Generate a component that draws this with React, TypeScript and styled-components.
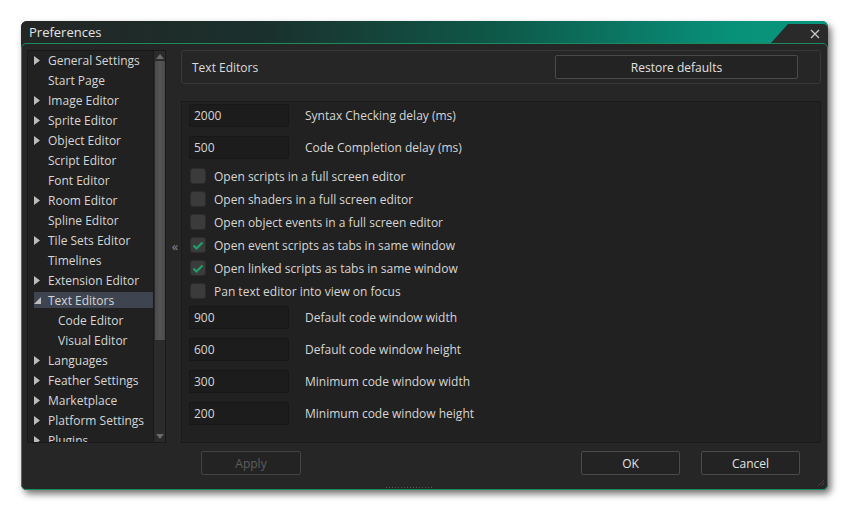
import React from 'react';
import styled, { createGlobalStyle } from 'styled-components';

const Global = createGlobalStyle`
  html, body { margin: 0; padding: 0; background: #ffffff; }
  body { font-family: "Open Sans", "DejaVu Sans", sans-serif; font-size: 12px; }
  * { box-sizing: border-box; }
`;

const Page = styled.div`
  width: 848px;
  height: 517px;
  padding: 21px 0 0 21px;
`;

const Window = styled.div`
  position: relative;
  width: 807px;
  height: 469px;
  display: flex;
  flex-direction: column;
  border-radius: 6px;
  background: #262626;
  box-shadow: 3px 4px 7px rgba(0, 0, 0, 0.55);
`;

const TitleBar = styled.div`
  position: relative;
  height: 22px;
  flex: none;
  display: flex;
  align-items: center;
  padding-left: 8px;
  border-radius: 6px 6px 0 0;
  background: linear-gradient(90deg, #232625 0%, #1a302c 30%, #0e5a4a 60%, #08917a 88%, #08977c 100%);
  color: #e4e4e4;
  font-size: 13px;
`;

const CloseCorner = styled.div`
  position: absolute;
  right: 0;
  top: 3px;
  width: 57px;
  height: 19px;
  background: #2a2a2a;
  clip-path: polygon(17px 0, 100% 0, 100% 100%, 0 100%);
  border-top-right-radius: 5px;
  display: flex;
  align-items: center;
  justify-content: flex-end;
  padding-right: 8px;
`;

const Body = styled.div`
  position: relative;
  flex: 1;
  display: flex;
  flex-direction: column;
  border: 1px solid #1d8a5e;
  border-radius: 5px;
  background: #262626;
  padding: 6px 6px 0 5px;
`;

const MainRow = styled.div`
  display: flex;
  height: 393px;
`;

const Tree = styled.div`
  width: 139px;
  display: flex;
  border: 1px solid #191919;
  background: #212121;
`;

const TreeList = styled.div`
  flex: 1;
  overflow: hidden;
  padding-top: 0;
  margin-top: -1px;
`;

const TreeRow = styled.div<{ $indent: number; $selected?: boolean }>`
  height: 20px;
  padding: 2px 0;
  display: flex;
  align-items: center;
  padding-left: ${(p) => 6 + p.$indent}px;
  color: #d6d6d6;
  white-space: nowrap;
  background: ${(p) => (p.$selected ? '#3e4550' : 'transparent')};
  background-clip: content-box;
`;

const Arrow = styled.span`
  width: 14px;
  flex: none;
  display: flex;
  align-items: center;
`;

const ScrollBar = styled.div`
  width: 12px;
  display: flex;
  flex-direction: column;
  align-items: center;
  background: #2b2b2b;
  border-left: 1px solid #1a1a1a;
`;

const ScrollArrow = styled.div<{ $h: number }>`
  height: ${(p) => p.$h}px;
  display: flex;
  align-items: center;
  justify-content: center;
`;

const Thumb = styled.div`
  width: 10px;
  height: 279px;
  background: linear-gradient(90deg, #4a4a4a, #545454 50%, #4a4a4a);
`;

const Spacer = styled.div`
  flex: 1;
`;

const Splitter = styled.div`
  width: 15px;
  display: flex;
  align-items: center;
  justify-content: center;
  color: #8a8a8a;
  font-size: 13px;
  padding: 0 0 2px 3px;
`;

const RightCol = styled.div`
  flex: 1;
  display: flex;
  flex-direction: column;
  gap: 17px;
`;

const Header = styled.div`
  height: 34px;
  display: flex;
  align-items: center;
  justify-content: space-between;
  padding: 0 22px 0 10px;
  border: 1px solid #383838;
  border-radius: 3px;
  background: #262626;
  color: #dcdcdc;
`;

const Button = styled.button<{ $w: number; $disabled?: boolean }>`
  width: ${(p) => p.$w}px;
  height: 24px;
  border: 1px solid #4a4a4a;
  border-radius: 2px;
  background: #232323;
  color: ${(p) => (p.$disabled ? '#5e5e5e' : '#e2e2e2')};
  border-color: ${(p) => (p.$disabled ? '#434343' : '#4a4a4a')};
  font-family: "Open Sans", "DejaVu Sans", sans-serif;
  font-size: 12px;
  padding: 0;
`;

const Panel = styled.div`
  flex: 1;
  background: #212121;
  border: 1px solid #1a1a1a;
  padding: 2px 7px;
  display: flex;
  flex-direction: column;
`;

const InputRow = styled.div`
  height: 23px;
  margin-bottom: 9px;
  display: flex;
  align-items: center;
  gap: 16px;
  color: #d6d6d6;
`;

const Field = styled.div`
  width: 100px;
  height: 23px;
  display: flex;
  align-items: center;
  padding-left: 4px;
  background: #1c1c1c;
  border: 1px solid #171717;
  border-radius: 2px;
  color: #d6d6d6;
`;

const CheckRow = styled.div`
  height: 16px;
  margin-bottom: 7px;
  display: flex;
  align-items: center;
  gap: 8px;
  padding-left: 1px;
  color: #d6d6d6;
`;

const Box = styled.div`
  width: 16px;
  height: 16px;
  border-radius: 3px;
  background: #3b3b3b;
  border: 1px solid #2c2c2c;
  display: flex;
  align-items: center;
  justify-content: center;
`;

const Footer = styled.div`
  display: flex;
  height: 24px;
  margin-top: 8px;
  padding: 0 21px 0 174px;
`;

const FooterRight = styled.div`
  margin-left: auto;
  display: flex;
  gap: 21px;
`;

const Grip = styled.div`
  align-self: flex-start;
  margin-left: 358px;
  width: 48px;
  height: 3px;
  margin-top: 11px;
  background-image: radial-gradient(circle, #5a5a5a 0.8px, transparent 1px);
  background-size: 3px 3px;
`;

const ResizeGrip = styled.div`
  position: absolute;
  right: 2px;
  bottom: 2px;
  width: 8px;
  height: 8px;
  display: flex;
`;

const RightTri = () => (
  <svg width="6" height="9" viewBox="0 0 6 9">
    <path d="M0 0 L6 4.5 L0 9 Z" fill="#bcbcbc" />
  </svg>
);

const DownTri = () => (
  <svg width="7" height="7" viewBox="0 0 7 7">
    <path d="M7 0 L7 7 L0 7 Z" fill="#bcbcbc" />
  </svg>
);

type Item = { label: string; arrow?: 'right' | 'down'; indent?: number; selected?: boolean };

const items: Item[] = [
  { label: 'General Settings', arrow: 'right' },
  { label: 'Start Page' },
  { label: 'Image Editor', arrow: 'right' },
  { label: 'Sprite Editor', arrow: 'right' },
  { label: 'Object Editor', arrow: 'right' },
  { label: 'Script Editor' },
  { label: 'Font Editor' },
  { label: 'Room Editor', arrow: 'right' },
  { label: 'Spline Editor' },
  { label: 'Tile Sets Editor', arrow: 'right' },
  { label: 'Timelines' },
  { label: 'Extension Editor', arrow: 'right' },
  { label: 'Text Editors', arrow: 'down', selected: true },
  { label: 'Code Editor', indent: 10 },
  { label: 'Visual Editor', indent: 10 },
  { label: 'Languages', arrow: 'right' },
  { label: 'Feather Settings', arrow: 'right' },
  { label: 'Marketplace', arrow: 'right' },
  { label: 'Platform Settings', arrow: 'right' },
  { label: 'Plugins', arrow: 'right' },
];

const Check = () => (
  <svg width="12" height="12" viewBox="0 0 12 12">
    <path d="M1.5 6.5 L4.5 9.5 L10.5 3.5" stroke="#1fa06a" strokeWidth="2.2" fill="none" />
  </svg>
);

type Setting =
  | { kind: 'input'; value: string; label: string }
  | { kind: 'check'; checked: boolean; label: string };

const settings: Setting[] = [
  { kind: 'input', value: '2000', label: 'Syntax Checking delay (ms)' },
  { kind: 'input', value: '500', label: 'Code Completion delay (ms)' },
  { kind: 'check', checked: false, label: 'Open scripts in a full screen editor' },
  { kind: 'check', checked: false, label: 'Open shaders in a full screen editor' },
  { kind: 'check', checked: false, label: 'Open object events in a full screen editor' },
  { kind: 'check', checked: true, label: 'Open event scripts as tabs in same window' },
  { kind: 'check', checked: true, label: 'Open linked scripts as tabs in same window' },
  { kind: 'check', checked: false, label: 'Pan text editor into view on focus' },
  { kind: 'input', value: '900', label: 'Default code window width' },
  { kind: 'input', value: '600', label: 'Default code window height' },
  { kind: 'input', value: '300', label: 'Minimum code window width' },
  { kind: 'input', value: '200', label: 'Minimum code window height' },
];

export default function App() {
  return (
    <Page>
      <Global />
      <Window>
        <TitleBar>
          Preferences
          <CloseCorner>
            <svg width="10" height="10" viewBox="0 0 10 10">
              <path d="M1 1 L9 9 M9 1 L1 9" stroke="#c8c8c8" strokeWidth="1.3" />
            </svg>
          </CloseCorner>
        </TitleBar>
        <Body>
          <MainRow>
            <Tree>
              <TreeList>
                {items.map((it) => (
                  <TreeRow key={it.label} $indent={it.indent ?? 0} $selected={it.selected}>
                    <Arrow>
                      {it.arrow === 'right' && <RightTri />}
                      {it.arrow === 'down' && <DownTri />}
                    </Arrow>
                    {it.label}
                  </TreeRow>
                ))}
              </TreeList>
              <ScrollBar>
                <ScrollArrow $h={10}>
                  <svg width="8" height="5" viewBox="0 0 8 5">
                    <path d="M0 5 L4 0 L8 5 Z" fill="#6a6a6a" />
                  </svg>
                </ScrollArrow>
                <Thumb />
                <Spacer />
                <ScrollArrow $h={12}>
                  <svg width="8" height="5" viewBox="0 0 8 5">
                    <path d="M0 0 L4 5 L8 0 Z" fill="#6a6a6a" />
                  </svg>
                </ScrollArrow>
              </ScrollBar>
            </Tree>
            <Splitter>«</Splitter>
            <RightCol>
              <Header>
                Text Editors
                <Button $w={243}>Restore defaults</Button>
              </Header>
              <Panel>
                {settings.map((s) =>
                  s.kind === 'input' ? (
                    <InputRow key={s.label}>
                      <Field>{s.value}</Field>
                      {s.label}
                    </InputRow>
                  ) : (
                    <CheckRow key={s.label}>
                      <Box>{s.checked && <Check />}</Box>
                      {s.label}
                    </CheckRow>
                  )
                )}
              </Panel>
            </RightCol>
          </MainRow>
          <Footer>
            <Button $w={100} $disabled>
              Apply
            </Button>
            <FooterRight>
              <Button $w={99}>OK</Button>
              <Button $w={99}>Cancel</Button>
            </FooterRight>
          </Footer>
          <Grip />
          <ResizeGrip>
            <svg width="8" height="8" viewBox="0 0 8 8">
              <path d="M7 1 L1 7 M7 4 L4 7" stroke="#5a5a5a" strokeWidth="1" strokeDasharray="1 1" />
            </svg>
          </ResizeGrip>
        </Body>
      </Window>
    </Page>
  );
}
